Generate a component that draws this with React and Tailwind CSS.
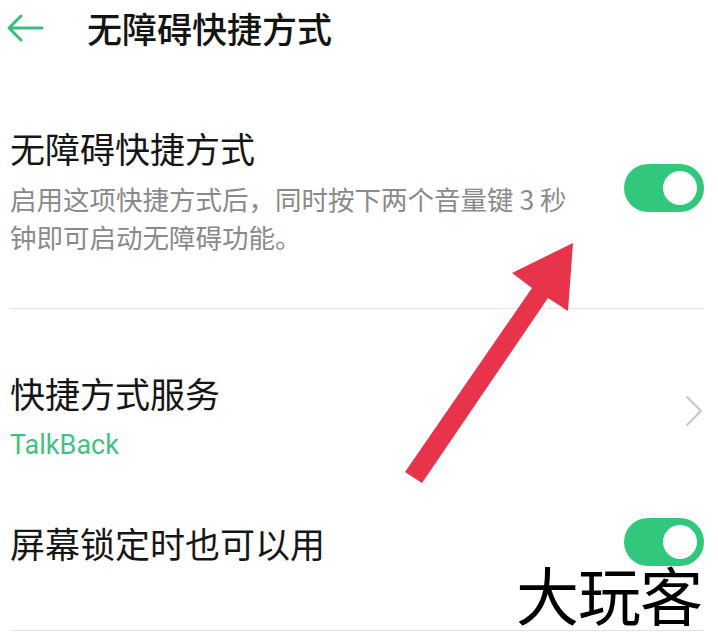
import React from "react";

function Toggle({ className = "" }) {
  return (
    <div className={"relative flex h-[48px] w-[80px] shrink-0 items-center justify-end rounded-full bg-[#31c77c] pr-[7px] " + className}>
      <div className="h-[34px] w-[34px] rounded-full bg-white" />
    </div>
  );
}

export default function App() {
  const cjk = { fontFamily: '"Noto Sans CJK SC", "Noto Sans", sans-serif' };
  return (
    <div className="relative h-[641px] w-[718px] overflow-hidden bg-white" style={cjk}>
      {/* Header */}
      <div className="flex h-[56px] items-center pl-[7px]">
        <svg width="37" height="28" viewBox="0 0 37 28" fill="none" stroke="#3dbb7e" strokeWidth="3" strokeLinecap="round" strokeLinejoin="round">
          <path d="M35 14H3M14 2L2 14l12 12" />
        </svg>
        <div className="ml-[43px] text-[35px] leading-[44px] font-medium text-[#141414]">无障碍快捷方式</div>
      </div>

      <div className="pl-[10px] pr-[14px]">
        {/* Section 1 */}
        <div className="mt-[70px] flex items-center border-b border-[#e3e3e3] pb-[52px]">
          <div className="flex-1">
            <div className="text-[35px] leading-[44px] text-[#161616]">无障碍快捷方式</div>
            <div className="mt-[10px] text-[26.5px] leading-[38px] text-[#8a8a8a]">
              启用这项快捷方式后，同时按下两个音量键 3 秒
              <br />
              钟即可启动无障碍功能。
            </div>
          </div>
          <Toggle className="mb-[6px]" />
        </div>

        {/* Section 2 */}
        <div className="mt-[62px] flex items-center">
          <div className="flex-1">
            <div className="text-[35px] leading-[44px] text-[#161616]">快捷方式服务</div>
            <div className="mt-[12px] text-[27px] leading-[36px] text-[#45c085]" style={{ fontFamily: 'Roboto, "Noto Sans", sans-serif' }}>
              TalkBack
            </div>
          </div>
          <svg className="mb-[12px] mr-[1px]" width="18" height="32" viewBox="0 0 18 32" fill="none" stroke="#c6c6c6" strokeWidth="2" strokeLinecap="round" strokeLinejoin="round">
            <path d="M2 2l14 14L2 30" />
          </svg>
        </div>

        {/* Section 3 */}
        <div className="mt-[57px] flex items-center border-b border-[#e3e3e3] pb-[64px]">
          <div className="flex-1 text-[35px] leading-[44px] text-[#161616]">屏幕锁定时也可以用</div>
          <Toggle className="mt-[-2px]" />
        </div>
      </div>

      {/* Red arrow overlay */}
      <svg className="pointer-events-none absolute left-0 top-0" width="718" height="641" viewBox="0 0 718 641">
        <polygon points="573,243 512,273 532,288 405,472 422,483 548,298 568,311" fill="#e8344b" />
      </svg>

      {/* Watermark */}
      <div className="pointer-events-none absolute left-[516px] top-[553px] text-[63px] leading-[80px] font-normal tracking-[-1px] text-black">
        大玩客
      </div>
    </div>
  );
}
